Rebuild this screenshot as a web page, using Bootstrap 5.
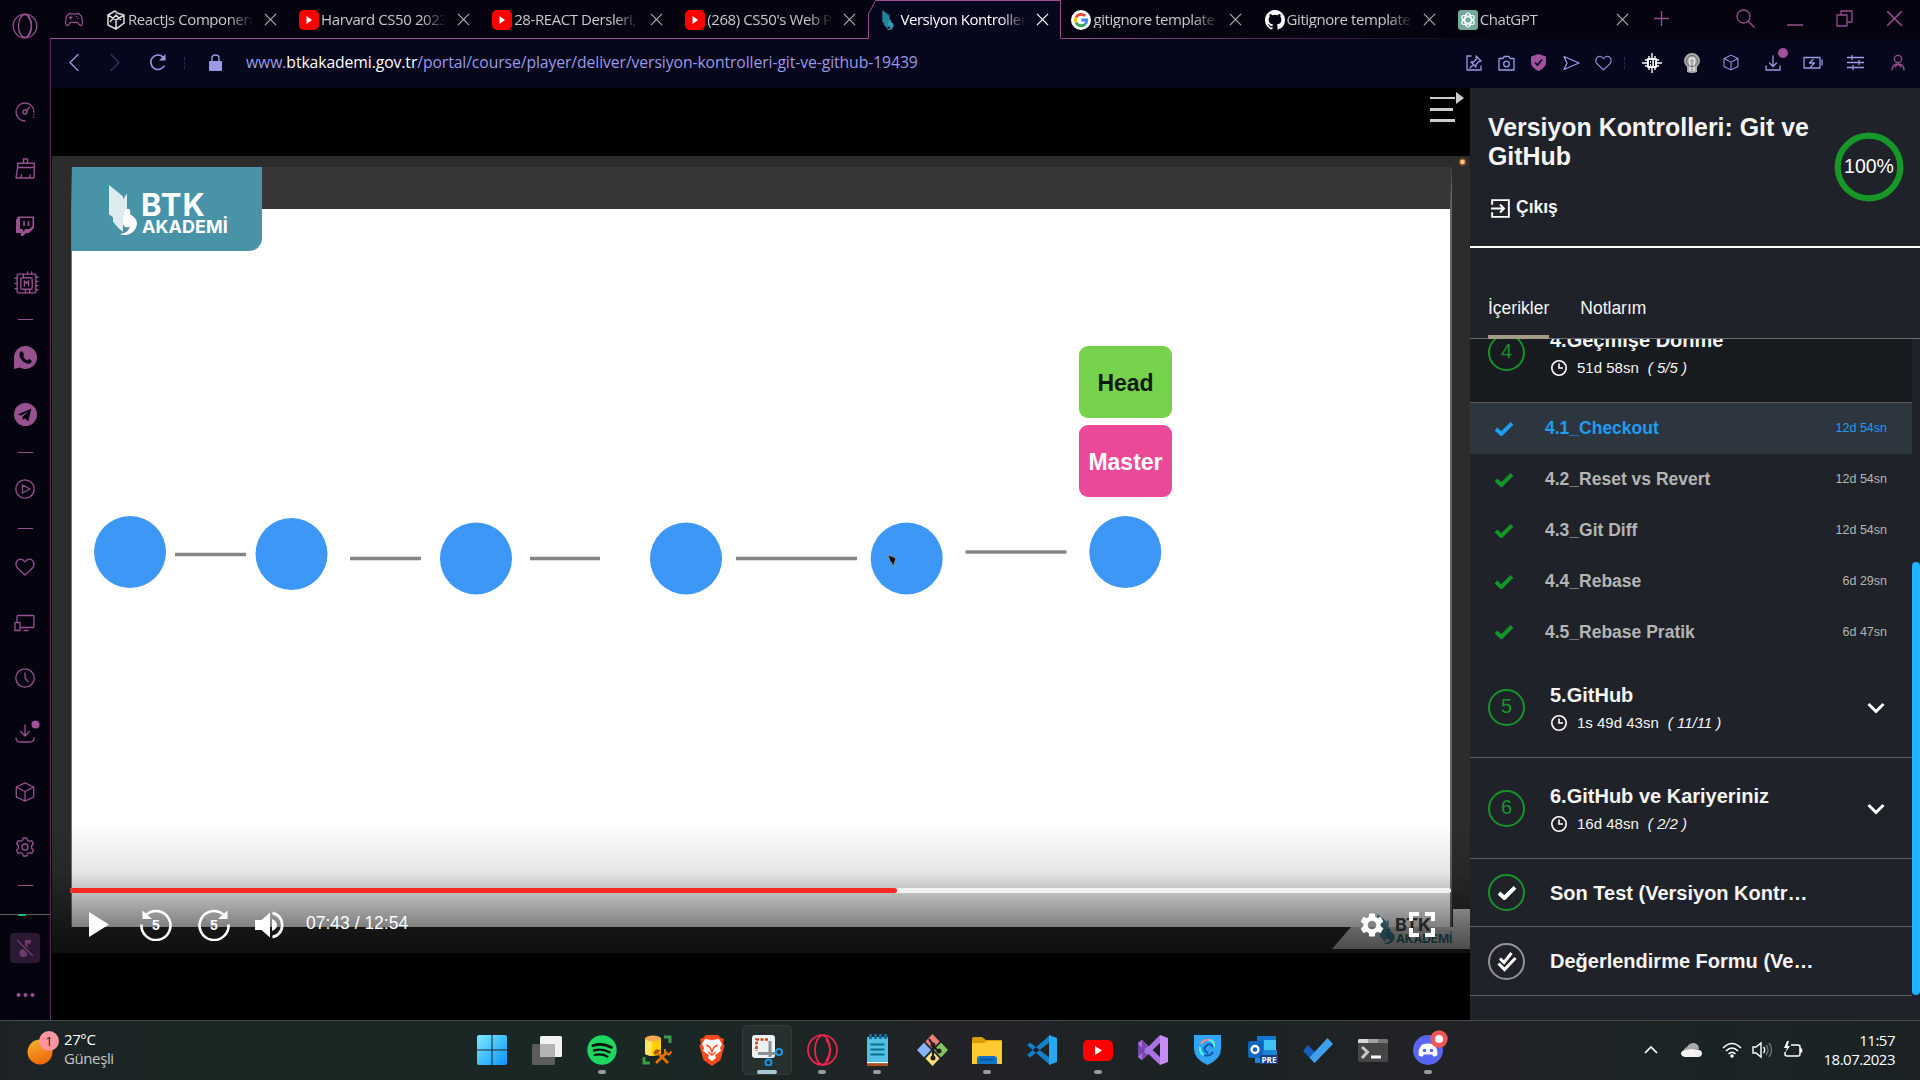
<!DOCTYPE html>
<html lang="tr">
<head>
<meta charset="utf-8">
<title>Versiyon Kontrolleri: Git ve GitHub</title>
<link href="https://cdn.jsdelivr.net/npm/bootstrap@5.3.0/dist/css/bootstrap.min.css" rel="stylesheet">
<style>
:root{--pu:#98508f;--lav:#9a9ae6;--gr:#159527}
body{width:1920px;height:1080px;overflow:hidden;background:#000;font-family:"Liberation Sans",sans-serif;line-height:1.2}
svg{display:block;flex:none}
.ui{font-family:"Open Sans","Noto Sans",sans-serif}
.ln{fill:none;stroke:currentColor;stroke-width:1.3;stroke-linecap:round;stroke-linejoin:round}
/* launcher column */
.dock{width:50px;background:#04030f;color:var(--pu);display:grid;justify-items:center;align-items:center;grid-template-rows:84px 56px 57px 57px 58px 15px 61px 53px 22px 52px 26px 51px 61px 50px 60px 57px 54px 22px 36px 31px 57px}
.dock>svg{margin-left:-1px}
.dash{width:15px;height:1px;background:var(--pu)}
.dock .logo{margin-top:-33px;margin-left:0}
.dock .chip{margin-left:2px}
.meter{width:50px;height:1px;background:#5d5c60;position:relative}
.meter::after{content:"";position:absolute;left:18px;top:0;width:8px;height:2px;border-radius:3px;background:#25b97a}
.mute{width:30px;height:30px;border-radius:4px;background:#2b1833;color:#6d3b6b}
/* tab strip */
.strip{height:39px;background:#04030f;color:var(--pu)}
.strip::after{content:"";position:absolute;left:0;right:0;bottom:0;height:1px;background:linear-gradient(90deg,var(--pu) 1010px,transparent 1440px)}
.tab{width:193.1px;height:31px;padding-left:10px;color:#c8c8cc;font-size:15px;letter-spacing:-.42px}
.tab .cap{width:126px;margin:-2px 0 0 2px;white-space:nowrap;-webkit-mask-image:linear-gradient(90deg,#000 80%,transparent);mask-image:linear-gradient(90deg,#000 80%,transparent)}
.tab .x{margin:-1px 0 0 10px;color:#aaa}
.tab.on{color:#fff;height:39px;z-index:2}
.tab.on .frame{position:absolute;left:0;top:0}
.tab.on .in{height:31px}
.addr{height:49px;padding-bottom:2px;background:#06061c;color:var(--lav)}
.url{font-size:15.75px;letter-spacing:-.1px}
.frame-l{border-left:1px solid #5a2c59}
/* player */
.player{width:1419px;background:#000}
.picture{height:797px;margin-top:68px;margin-left:1px;background:#2c2c2c;overflow:hidden}
.slide{position:absolute;left:19px;top:11px;width:1381px;height:760px;background:#fff;border-top:42px solid #373737;border-right:2px solid #666;border-left:1px solid #777}
.brand{position:absolute;left:20px;top:11px;width:190px;height:84px;background:#4893a8;border-bottom-right-radius:13px;color:#fff}
.btk{position:absolute;font-weight:700;line-height:.8;font-family:Inter,sans-serif}
.node{position:absolute;left:1027px;width:93px;height:72px;border-radius:9px;padding-top:3px;font-weight:700;font-size:23px}
.shade{position:absolute;left:0;right:0;bottom:0;height:130px;background:linear-gradient(rgba(0,0,0,0),rgba(0,0,0,.1) 38%,rgba(0,0,0,.28) 56%,rgba(0,0,0,.5) 80%,rgba(0,0,0,.66))}
.canvas{position:absolute;left:0;top:0}
.controls{position:absolute;left:18px;right:19px;top:732px;color:#fff}
.track{height:5px;background:#f1f1f1;border-radius:3px}
.track>div{height:5px;background:#f42a22;border-radius:3px}
.clock{font-size:17.5px;margin:-2px 0 0 22px}
/* course panel */
.panel{width:450px;background:#1f2329;color:#f5f5f5}
.head{height:160px;border-bottom:2px solid #fff;padding:25px 16px 0 18px}
.head h1{font-size:24.9px;line-height:29px;font-weight:700;width:340px}
.ttabs{height:91px;border-bottom:1px solid #6b6d70;padding-left:18px;font-size:17.5px}
.ttabs>span{padding-top:50px;height:91px;margin-right:31px;line-height:20px}
.ttabs>.on{border-bottom:4px solid #a39b84;z-index:1}
.list{width:442px;height:681px;overflow:hidden}
.sec{height:101px;border-bottom:1px solid #5c6063;padding:26px 27px 0 18px}
.sec.past{background:#181b1f;margin-top:-37px}
.num{width:37px;height:37px;border:2px solid var(--gr);border-radius:50%;color:var(--gr);font-size:20px;margin-top:6px;line-height:30px;text-align:center;flex:none}
.ttl{font-size:20px;font-weight:700;line-height:24px;white-space:nowrap}
.meta{font-size:15px;line-height:20px;margin-top:6px}
.les{height:51px;padding:0 25px 0 25px;color:#b4b4b4;font-size:17.5px;font-weight:700}
.les:nth-child(6){height:50px}
.les svg{color:var(--gr);margin:-1px 1px 0 -1px}
.les small{font-size:12.5px;font-weight:400}
.les.on,.les.on svg{color:#1f9df0}
.les.on{background:#2d363f}
.one{height:68px;border-bottom:1px solid #5c6063;padding-left:18px}
.rail{width:8px;padding-top:223px}
.rail>div{height:433px;border-radius:4px;background:#1eb2ff}
/* taskbar */
.task{height:60px;border-top:1px solid #454a4b;background:linear-gradient(90deg,#1d2226,#1b2725 180px,#1a2725 660px,#222225 1000px,#1f2226 1040px,#1b2323 1220px,#222226 1440px,#1b2424 1700px,#1c2224);color:#fff;font-size:15px}
.app{width:55.1px;height:59px;padding-top:4px;position:relative}
.app .ic{width:50px;height:50px;border-radius:5px;display:flex;align-items:center;justify-content:center}
.app.on .ic{background:#26312f;border:1px solid #323d3b}
.app.run::after,.app.on::after{content:"";position:absolute;left:50%;top:49px;width:8px;height:4px;margin-left:-4px;border-radius:2px;background:#989b9c}
.app.on::after{width:20px;margin-left:-10px;background:#a9c7d0}
.weather{width:464px;padding:0 0 3px 27px}
.date{line-height:19px;letter-spacing:-.5px}
</style>
<script src="https://cdn.jsdelivr.net/npm/bootstrap@5.3.0/dist/js/bootstrap.bundle.min.js"></script>
</head>
<body class="d-flex flex-column">
<svg width="0" height="0" class="position-absolute">
 <symbol id="x" viewBox="0 0 14 14"><path d="M1 1l12 12M13 1L1 13" fill="none" stroke="currentColor" stroke-width="1.3"/></symbol>
 <symbol id="yt" viewBox="0 0 20 20"><rect width="20" height="20" rx="5" fill="#f00"/><path d="M7.500 6v8l5.500-4z" fill="#fff"/></symbol>
 <symbol id="ck" viewBox="0 0 20 15"><path d="M2 8l5.300 5L18 2.300" fill="none" stroke="currentColor" stroke-width="4"/></symbol>
 <symbol id="tm" viewBox="0 0 18 18"><circle cx="9" cy="9" r="7.200" fill="none" stroke="#fff" stroke-width="1.600"/><path d="M9 4.500V9h4" fill="none" stroke="#fff" stroke-width="1.600"/></symbol>
 <symbol id="dn" viewBox="0 0 18 12"><path d="M1.500 2L9 9.500 16.500 2" fill="none" stroke="#fff" stroke-width="3"/></symbol>
 <symbol id="cube" viewBox="0 0 20 20"><path class="ln" d="M10 .8l8.700 4.200v10L10 19.200 1.300 15V5zM1.300 5L10 9.500 18.700 5M10 9.500v9.500"/></symbol>
 <symbol id="bird" viewBox="0 0 28 48"><path d="M0 0l4 3v28l-4-3zM4 3l5 4v34l-5-6zM9 7l5 4v34l-5-4zM14 14l4-6v16l-4 4z" fill="currentColor" opacity=".82"/><path d="M14 29q2-7 6-6 2 1 1 5 6 3 7 8a12 12 0 0 1-17 11q8-1 10-7-5 2-7-2z" fill="currentColor"/></symbol>
 <symbol id="pad" viewBox="0 0 20 16"><path class="ln" d="M5 1.500q5 1.500 10 0l3 3 1 6q0 4-1.500 4-2 0-3.500-3.500H6q-1.500 3.500-3.500 3.500-1.500 0-1.500-4l1-6zM6.500 4.500v3M5 6h3M12.500 5h.3M14 7h.3"/></symbol>
</svg>

<div class="d-flex" style="height:1020px">
 <aside class="dock">
  <svg class="logo" width="26" height="26" viewBox="0 0 26 26"><g class="ln"><circle cx="13" cy="13" r="11.800"/><ellipse cx="13" cy="13" rx="6.500" ry="11.500"/><path d="M16 3.500q7 9 0 19"/></g></svg>
  <svg width="20" height="20" viewBox="0 0 20 20"><g class="ln"><path d="M10 19A9 9 0 1 1 19 10M19 12.500v.2M18.500 15v.2"/><circle cx="10" cy="10" r="2"/><path d="M11.500 8.500l3-3.300"/></g></svg>
  <svg width="21" height="21" viewBox="0 0 20 20" style="margin-left:0"><path class="ln" d="M8 5V1h4v4M2.500 9V5h16v4zM2.500 9L1 19h17l.5-10M5.500 19l.8-3M14 19l.5-3"/></svg>
  <svg width="20" height="20" viewBox="0 0 20 20"><path fill="currentColor" fill-rule="evenodd" d="M3 .5h16v11.500l-5 5h-3l-3 3H6v-3H1V4zM5 2v11h3v2.500L10.500 13h4l3-3V2z"/><path d="M9 5v5M13.500 5v5" stroke="currentColor" stroke-width="1.700"/></svg>
  <svg class="chip" width="25" height="25" viewBox="0 0 24 24"><g class="ln"><rect x="3" y="3" width="18" height="18" rx="1"/><rect x="6.500" y="6.500" width="11" height="11" rx="2"/><path d="M10 14.500v-5l2 2.500 2-2.500v5M9 3v3M13 1v2M17 1v2M1 7h2M1 12h2M1 17h2M21 6h2M21 10h2M21 14h2M21 18h2M11 18v3M15 18v3"/></g></svg>
  <i class="dash"></i>
  <svg width="23" height="23" viewBox="0 0 24 24" style="margin-left:0"><path fill="currentColor" d="M12 0a12 12 0 1 1-6 22.400L0 24V12A12 12 0 0 1 12 0z"/><path fill="#04030f" d="M6 7q1-2 3-1l1.500 3-1 2q1.500 3 4.500 4l1.500-1.500 3 1.500q0 3-3 3.500-4 0-7.500-4Q5 10.500 6 7z"/></svg>
  <svg width="23" height="23" viewBox="0 0 24 24" style="margin-left:0"><circle cx="12" cy="12" r="12" fill="currentColor"/><path fill="#04030f" d="M4 12l14-6-3 13-4-3-2 2v-4l6-5-8 4z"/></svg>
  <i class="dash"></i>
  <svg width="20" height="20" viewBox="0 0 20 20"><g class="ln"><circle cx="10" cy="10" r="9.200"/><path d="M7.500 6v8l7.500-4z"/></g></svg>
  <i class="dash"></i>
  <svg width="20" height="18" viewBox="0 0 20 18"><path class="ln" d="M10 17L2 9.500Q-.5 5 3 2q4-2.500 7 2 3-4.500 7-2 3.500 3 1 7.500z"/></svg>
  <svg width="21" height="18" viewBox="0 0 21 18"><path class="ln" d="M3 7V2.500q0-1 1-1h15q1 0 1 1v10q0 1-1 1H7M1 8.500h5v8H1zM10 16.500h4"/></svg>
  <svg width="20" height="20" viewBox="0 0 20 20"><g class="ln"><circle cx="10" cy="10" r="9.200"/><path d="M10 5v5l3 3.500"/></g></svg>
  <svg width="20" height="24" viewBox="0 0 20 24" overflow="visible"><path class="ln" d="M10 4v11M5.500 10.500L10 15l4.500-4.500M1 17q0 4 4 4h10q4 0 4-4"/><circle cx="20.500" cy="3.500" r="4" fill="#a1509a"/></svg>
  <svg width="20" height="20"><use href="#cube"/></svg>
  <svg width="20" height="20" viewBox="0 0 20 20"><g class="ln"><path d="M8.300 1h3.400l.8 2.500 1.500.8 2.600-.6 1.800 3-1.800 2v2.600l1.800 2-1.800 3-2.600-.6-1.500.8-.8 2.500H8.300l-.8-2.500-1.500-.8-2.600.6-1.800-3 1.800-2V8.700l-1.800-2 1.800-3 2.600.6 1.500-.8z"/><circle cx="10" cy="10" r="3"/></g></svg>
  <i class="dash"></i>
  <div class="meter"></div>
  <div class="mute d-flex align-items-center justify-content-center"><svg width="18" height="18" viewBox="0 0 18 18"><path d="M9 14V1h6v3.500h-3.500V14" fill="currentColor"/><circle cx="7.500" cy="14" r="4" fill="currentColor"/><path d="M1 1l16 16" stroke="#2b1833" stroke-width="4"/><path d="M1 1l16 16" stroke="currentColor" stroke-width="1.600"/></svg></div>
  <svg width="19" height="12" viewBox="0 0 19 12" style="margin-left:0"><g fill="currentColor"><circle cx="2.500" cy="9" r="2"/><circle cx="9.500" cy="9" r="2"/><circle cx="16.500" cy="9" r="2"/></g></svg>
 </aside>

 <main class="flex-grow-1 d-flex flex-column">
  <div class="strip ui d-flex position-relative align-items-start">
   <div class="d-flex align-items-center" style="width:46px;height:39px;padding-left:14px"><svg width="20" height="15"><use href="#pad"/></svg></div>
   <div class="tab d-flex align-items-center mt-1"><svg width="20" height="20" viewBox="0 0 20 20"><path d="M2 5l7-4 2 2 7 2v8l-8 6-8-4zM2 5l8 5 8-5M10 10v8M4 12l6-7 5 5" fill="none" stroke="#ddd" stroke-width="1.500"/></svg><span class="cap">ReactJs Componen</span><svg class="x" width="13" height="13"><use href="#x"/></svg></div>
   <div class="tab d-flex align-items-center mt-1"><svg width="20" height="20"><use href="#yt"/></svg><span class="cap">Harvard CS50 2023</span><svg class="x" width="13" height="13"><use href="#x"/></svg></div>
   <div class="tab d-flex align-items-center mt-1"><svg width="20" height="20"><use href="#yt"/></svg><span class="cap">28-REACT Dersleri,</span><svg class="x" width="13" height="13"><use href="#x"/></svg></div>
   <div class="tab d-flex align-items-center mt-1"><svg width="20" height="20"><use href="#yt"/></svg><span class="cap">(268) CS50's Web P</span><svg class="x" width="13" height="13"><use href="#x"/></svg></div>
   <div class="tab on position-relative">
    <svg class="frame" width="194" height="39" viewBox="0 0 194 39"><path d="M.5 39V14L7.500.5h185V38.500H194V39z" fill="#06061c"/><path d="M.5 38.500V14L7.500.5h185v38" fill="none" stroke="#98508f"/></svg>
    <div class="in d-flex align-items-center position-relative mt-1"><svg width="20" height="20" viewBox="0 0 28 48" color="#2f9db4"><use href="#bird"/></svg><span class="cap">Versiyon Kontroller</span><svg class="x text-white" width="13" height="13"><use href="#x"/></svg></div>
   </div>
   <div class="tab d-flex align-items-center mt-1"><svg width="20" height="20" viewBox="0 0 20 20"><circle cx="10" cy="10" r="10" fill="#fff"/><g fill="none" stroke-width="2.800"><path d="M14.200 6A5.800 5.800 0 0 0 5 7.300" stroke="#ea4335"/><path d="M5 7.300a5.800 5.800 0 0 0 0 5.400" stroke="#fbbc05"/><path d="M5 12.700a5.800 5.800 0 0 0 9 1.500" stroke="#34a853"/><path d="M14 14.200A5.800 5.800 0 0 0 15.800 10H10.300" stroke="#4285f4"/></g></svg><span class="cap">gitignore template</span><svg class="x" width="13" height="13"><use href="#x"/></svg></div>
   <div class="tab d-flex align-items-center mt-1"><svg width="20" height="20" viewBox="0 0 16 16"><path fill="#fff" d="M8 0C3.580 0 0 3.580 0 8c0 3.540 2.290 6.530 5.470 7.590.4.070.55-.17.55-.38 0-.19-.01-.82-.01-1.490-2.010.37-2.530-.49-2.690-.94-.09-.23-.48-.94-.82-1.130-.28-.15-.68-.52-.01-.53.63-.01 1.080.58 1.230.82.720 1.210 1.870.87 2.330.66.070-.52.28-.87.51-1.070-1.780-.2-3.640-.89-3.640-3.950 0-.87.31-1.590.82-2.150-.08-.2-.36-1.020.08-2.120 0 0 .67-.21 2.200.82a7.600 7.600 0 0 1 4 0c1.530-1.040 2.200-.82 2.200-.82.44 1.100.16 1.920.08 2.120.51.56.82 1.270.82 2.150 0 3.070-1.870 3.750-3.650 3.950.29.25.54.73.54 1.480 0 1.070-.01 1.930-.01 2.200 0 .21.15.46.55.38A8 8 0 0 0 16 8c0-4.420-3.580-8-8-8z"/></svg><span class="cap">Gitignore template</span><svg class="x" width="13" height="13"><use href="#x"/></svg></div>
   <div class="tab d-flex align-items-center mt-1"><svg width="20" height="20" viewBox="0 0 20 20"><rect width="20" height="20" rx="3" fill="#74aa9c"/><g fill="none" stroke="#fff" stroke-width="1.200"><ellipse cx="10" cy="10" rx="3.300" ry="7"/><ellipse cx="10" cy="10" rx="3.300" ry="7" transform="rotate(60 10 10)"/><ellipse cx="10" cy="10" rx="3.300" ry="7" transform="rotate(120 10 10)"/></g></svg><span class="cap">ChatGPT</span><svg class="x" width="13" height="13"><use href="#x"/></svg></div>
   <div class="d-flex flex-grow-1 align-items-center" style="height:36px">
    <svg width="15" height="15" viewBox="0 0 15 15" style="margin-left:13px"><path class="ln" d="M7.500 0v15M0 7.500h15"/></svg>
    <svg width="19" height="19" viewBox="0 0 19 19" style="margin-left:67px"><g class="ln"><circle cx="7.500" cy="7.500" r="6.500"/><path d="M12 12l6 6"/></g></svg>
    <svg width="16" height="16" viewBox="0 0 16 16" style="margin-left:32px"><path class="ln" d="M0 15h16"/></svg>
    <svg width="17" height="17" viewBox="0 0 17 17" style="margin-left:33px"><path class="ln" d="M1 5h10v11H1zM5 5V1h11v11h-5"/></svg>
    <svg width="17" height="17" style="margin-left:33px"><use href="#x"/></svg>
   </div>
  </div>

  <div class="addr frame-l ui d-flex align-items-center">
   <svg width="10" height="17" viewBox="0 0 10 17" style="margin-left:18px"><path class="ln" d="M9 .5l-8 8 8 8"/></svg>
   <svg width="10" height="17" viewBox="0 0 10 17" style="margin-left:31px;color:#35345f"><path class="ln" d="M1 .5l8 8-8 8"/></svg>
   <svg width="18" height="17" viewBox="0 0 18 17" style="margin-left:29px"><path d="M15.500 11.500A7.200 7.200 0 1 1 14 3" fill="none" stroke="currentColor" stroke-width="1.600"/><path d="M16.500 0v6.500H10z" fill="currentColor"/></svg>
   <i style="width:1px;height:12px;margin-left:17px;border-left:1px dashed #2b2a55"></i>
   <svg width="13" height="17" viewBox="0 0 13 17" style="margin-left:24px"><rect y="7" width="13" height="10" rx="1" fill="currentColor"/><path d="M3 8V4q0-3 3.500-3T10 4v4" fill="none" stroke="currentColor" stroke-width="1.400"/></svg>
   <span class="url text-nowrap" style="margin-left:24px;width:684px">www.<span class="text-white">btkakademi.gov.tr</span>/portal/course/player/deliver/versiyon-kontrolleri-git-ve-github-19439</span>
   <div class="d-flex align-items-center ms-auto" style="padding-right:15px">
    <svg width="16" height="16" viewBox="0 0 16 16"><path class="ln" d="M5 1H1v14h14v-4M10 1l5 5-2 .5-3 3v2.500L5 7h2.500l3-3zM7.500 9.500L4 13"/></svg>
    <svg width="17" height="16" viewBox="0 0 17 16" style="margin-left:16px"><g class="ln"><path d="M1 3.500h4l1-2h5l1 2h4V15H1z"/><circle cx="8.500" cy="9" r="2.800"/></g></svg>
    <svg width="15" height="17" viewBox="0 0 15 17" style="margin-left:16px"><path d="M7.500 0L15 2.500V9q0 4.500-7.500 8Q0 13.500 0 9V2.500z" fill="#a1509a"/><path d="M4 8.500l2.500 2.500L11 5.500" fill="none" stroke="#06061c" stroke-width="1.600"/></svg>
    <svg width="17" height="16" viewBox="0 0 17 16" style="margin-left:17px"><path class="ln" d="M1 1.500L16 8 1 14.500 4 8z"/></svg>
    <svg width="17" height="16" viewBox="0 0 20 18" style="margin-left:15px"><path class="ln" d="M10 17L2 9.500Q-.5 5 3 2q4-2.500 7 2 3-4.500 7-2 3.500 3 1 7.500z"/></svg>
    <i style="width:1px;height:12px;margin-left:12px;border-left:1px dashed #2b2a55"></i>
    <svg width="20" height="20" viewBox="0 0 20 20" style="margin-left:17px"><path d="M7 3v14M10 0v20M13 3v14M3 7h14M0 10h20M3 13h14" stroke="#fff" stroke-width="1.400"/><rect x="5" y="5" width="10" height="10" rx="1" fill="#fff"/><path d="M7.500 13V7.500h2.200V13M7.500 10.500h2.200M12.500 7v6" fill="none" stroke="#06061c" stroke-width="1.200"/></svg>
    <svg width="18" height="20" viewBox="0 0 18 20" style="margin-left:21px"><path d="M9 0a8 8 0 0 1 8 8q0 3-3 6v5q-5 2-10 0v-5Q1 11 1 8a8 8 0 0 1 8-8z" fill="#aaa"/><path d="M7 18v-7Q5 5 9 5t2 6v7" fill="none" stroke="#eee" stroke-width="1.400"/><circle cx="9" cy="8" r="5.500" fill="none" stroke="#666"/></svg>
    <svg width="16" height="17" style="margin-left:22px" viewBox="0 0 20 20"><use href="#cube"/></svg>
    <svg width="16" height="17" viewBox="0 0 16 17" overflow="visible" style="margin-left:26px"><path class="ln" d="M8 2v10M4.500 9L8 12.500 11.500 9M1 12v4h14v-4"/><circle cx="18" cy="-1" r="5" fill="#a1509a"/></svg>
    <svg width="20" height="13" viewBox="0 0 20 13" style="margin-left:22px"><path class="ln" d="M1 1.500h16v10.500H1zM19 4v5M10 3.500L6.500 7h5L8 10.500"/></svg>
    <svg width="17" height="17" viewBox="0 0 17 17" style="margin-left:24px"><path class="ln" d="M0 3.500h17M0 8.500h17M0 13.500h17M5 1.500v4M12 6.500v4M6 11.500v4"/></svg>
    <svg width="14" height="17" viewBox="0 0 14 17" style="margin-left:27px;color:#98508f"><g class="ln"><circle cx="7" cy="5" r="3.700"/><path d="M1 16q0-6 6-6t6 6M4 13l3-3 3 3"/></g></svg>
   </div>
  </div>

  <div class="d-flex flex-grow-1 frame-l">
   <section class="player position-relative">
    <svg class="position-absolute" style="left:1378px;top:4px" width="36" height="32" viewBox="0 0 36 32"><path d="M1 6h25" stroke="#ccc" stroke-width="2"/><path d="M1 17.500h23M1 28.500h25" stroke="#ccc" stroke-width="3"/><path d="M27 0l8 6-8 6z" fill="#ccc"/></svg>
    <div class="picture position-relative">
     <div class="slide"></div>
     <svg class="canvas" width="1418" height="797" viewBox="52 156 1418 797">
      <g stroke="#858585" stroke-width="3.500"><path d="M175 554.500h71M350 558.500h71M530 558.500h70M736 558.500h121M965.500 552h101"/></g>
      <g fill="#3c97f7"><circle cx="130" cy="552" r="36"/><circle cx="291.500" cy="554" r="36"/><circle cx="476" cy="558.500" r="36"/><circle cx="686" cy="558.500" r="36"/><circle cx="906.700" cy="558.500" r="36"/><circle cx="1125.300" cy="552" r="36"/></g>
      <path d="M888 555l8 3-2 6 2 2-3-1-2-3-1-1z" fill="#111" stroke="#999" stroke-width=".8"/>
      <circle cx="1462.500" cy="162" r="4" fill="#7a4118"/><circle cx="1462.500" cy="162" r="2.400" fill="#ffc98e"/>
      <path d="M1332 949l19-22h102v-18h17v40z" fill="#d2d2d2"/>
      <svg x="1376" y="914" width="20" height="30" color="#2e7f93"><use href="#bird"/></svg>
     </svg>
     <div class="node d-flex align-items-center justify-content-center" style="top:190px;background:#76d14b;color:#0c1a0c">Head</div>
     <div class="node d-flex align-items-center justify-content-center" style="top:269px;background:#eb4998;color:#fff">Master</div>
     <div class="brand"><svg width="28" height="50" viewBox="0 0 28 48" preserveAspectRatio="none" style="margin:18px 0 0 37px"><use href="#bird"/></svg></div>
     <span class="btk text-white" style="left:89px;top:37px;font-size:31px;letter-spacing:1px">BTK</span>
     <span class="btk text-white" style="left:90px;top:64px;font-size:18px;letter-spacing:.05px">AKADEMİ</span>
     <span class="btk" style="left:1343px;top:762px;font-size:18px;color:#444">BTK</span>
     <span class="btk" style="left:1344px;top:778px;font-size:12px;color:#2f6b78;letter-spacing:-.1px">AKADEMİ</span>
     <div class="shade"></div>
     <div class="controls">
      <div class="track"><div style="width:827px"></div></div>
      <div class="d-flex align-items-center" style="padding:9px 16px 0 19px;height:54px">
       <svg width="20" height="25" viewBox="0 0 20 25"><path d="M0 0l20 12.500L0 25z" fill="#fff"/></svg>
       <svg width="32" height="32" viewBox="0 0 32 32" style="margin-left:31px"><path d="M1.500 15.500a14.500 14.500 0 1 0 5-10" fill="none" stroke="#fff" stroke-width="2.600"/><path d="M2.500 1.500v8.500H12z" fill="#fff"/><text x="16" y="21" text-anchor="middle" font-size="14" font-weight="700" fill="#fff">5</text></svg>
       <svg width="32" height="32" viewBox="0 0 32 32" style="margin-left:26px"><path d="M30.500 15.500a14.500 14.500 0 1 1-5-10" fill="none" stroke="#fff" stroke-width="2.600"/><path d="M29.500 1.500v8.500H20z" fill="#fff"/><text x="16" y="21" text-anchor="middle" font-size="14" font-weight="700" fill="#fff">5</text></svg>
       <svg width="29" height="28" viewBox="0 0 29 28" style="margin-left:25px"><path d="M0 9h6.500L15 1.500v25L6.500 19H0zM17 8q5 2 5 6t-5 6z" fill="#fff"/><path d="M17.500 1.800a12.500 12.500 0 0 1 0 24.400" fill="none" stroke="#fff" stroke-width="2.800"/></svg>
       <span class="clock">07:43 / 12:54</span>
       <svg class="ms-auto" width="24" height="24" viewBox="2 2 20 20"><path fill="#fff" d="M19.140 12.940c.04-.3.060-.61.060-.94s-.02-.64-.07-.94l2.030-1.580a.49.49 0 0 0 .12-.61l-1.920-3.320a.49.49 0 0 0-.59-.22l-2.390.96a7 7 0 0 0-1.620-.94l-.36-2.540A.48.480 0 0 0 13.920 2.400h-3.840a.48.480 0 0 0-.47.410l-.36 2.540a7 7 0 0 0-1.620.94l-2.390-.96a.48.480 0 0 0-.59.220L2.740 8.870a.48.480 0 0 0 .12.610l2.030 1.580a7 7 0 0 0 0 1.880l-2.030 1.580a.49.490 0 0 0-.12.610l1.920 3.320c.12.220.37.290.59.220l2.390-.96c.5.380 1.030.7 1.620.94l.36 2.540c.05.240.24.410.48.410h3.840c.24 0 .44-.17.470-.41l.36-2.540a7 7 0 0 0 1.620-.94l2.390.96c.22.080.47 0 .59-.22l1.920-3.320a.48.480 0 0 0-.12-.61zM12 15.600a3.600 3.600 0 1 1 0-7.200 3.600 3.600 0 0 1 0 7.200z"/></svg>
       <svg width="26" height="25" viewBox="0 0 26 25" style="margin-left:25px"><path d="M2 9V2h8M16 2h8v7M24 16v7h-8M10 23H2v-7" fill="none" stroke="#fff" stroke-width="4"/></svg>
      </div>
     </div>
    </div>
   </section>

   <section class="panel">
    <div class="head d-flex justify-content-between">
     <div>
      <h1 class="m-0">Versiyon Kontrolleri: Git ve GitHub</h1>
      <div class="d-flex align-items-center fw-bold" style="margin:25px 0 0 3px;font-size:17.500px"><svg width="19" height="19" viewBox="0 0 20 20" style="margin-top:3px"><path d="M1.200 6V1.200h17.600v17.600H1.200V14M0 10h13M9.500 5.800L13.700 10l-4.200 4.200" fill="none" stroke="#fff" stroke-width="2"/></svg><span style="margin-left:6px">Çıkış</span></div>
     </div>
     <svg width="70" height="70" viewBox="0 0 70 70" style="margin-top:19px"><circle cx="35" cy="35" r="31.300" fill="none" stroke="#159827" stroke-width="6.200"/><text x="35" y="41" text-anchor="middle" font-size="19.500" fill="#fff">100%</text></svg>
    </div>
    <div class="ttabs d-flex"><span class="on position-relative">İçerikler</span><span>Notlarım</span></div>
    <div class="d-flex">
     <div class="list">
      <div class="sec past d-flex"><div class="num">4</div><div style="margin-left:25px"><div class="ttl">4.Geçmişe Dönme</div><div class="meta d-flex align-items-center"><svg width="18" height="18"><use href="#tm"/></svg><span style="margin:0 9px">51d 58sn</span><i>( 5/5 )</i></div></div></div>
      <div class="les on d-flex align-items-center"><svg width="20" height="15"><use href="#ck"/></svg><span style="margin-left:30px">4.1_Checkout</span><small class="ms-auto">12d 54sn</small></div>
      <div class="les d-flex align-items-center"><svg width="20" height="15"><use href="#ck"/></svg><span style="margin-left:30px">4.2_Reset vs Revert</span><small class="ms-auto">12d 54sn</small></div>
      <div class="les d-flex align-items-center"><svg width="20" height="15"><use href="#ck"/></svg><span style="margin-left:30px">4.3_Git Diff</span><small class="ms-auto">12d 54sn</small></div>
      <div class="les d-flex align-items-center"><svg width="20" height="15"><use href="#ck"/></svg><span style="margin-left:30px">4.4_Rebase</span><small class="ms-auto">6d 29sn</small></div>
      <div class="les d-flex align-items-center"><svg width="20" height="15"><use href="#ck"/></svg><span style="margin-left:30px">4.5_Rebase Pratik</span><small class="ms-auto">6d 47sn</small></div>
      <div class="sec d-flex"><div class="num">5</div><div style="margin-left:25px"><div class="ttl">5.GitHub</div><div class="meta d-flex align-items-center"><svg width="18" height="18"><use href="#tm"/></svg><span style="margin:0 9px">1s 49d 43sn</span><i>( 11/11 )</i></div></div><svg class="ms-auto" width="18" height="12" style="margin-top:19px"><use href="#dn"/></svg></div>
      <div class="sec d-flex"><div class="num">6</div><div style="margin-left:25px"><div class="ttl">6.GitHub ve Kariyeriniz</div><div class="meta d-flex align-items-center"><svg width="18" height="18"><use href="#tm"/></svg><span style="margin:0 9px">16d 48sn</span><i>( 2/2 )</i></div></div><svg class="ms-auto" width="18" height="12" style="margin-top:19px"><use href="#dn"/></svg></div>
      <div class="one d-flex align-items-center"><div class="num m-0 d-flex align-items-center justify-content-center text-white"><svg width="20" height="15"><use href="#ck"/></svg></div><div class="ttl" style="margin-left:25px">Son Test (Versiyon Kontr…</div></div>
      <div class="one d-flex align-items-center" style="height:69px"><div class="num m-0 d-flex align-items-center justify-content-center text-white" style="border-color:#919395"><svg width="20" height="21" viewBox="0 0 20 21"><path d="M3 7.500l4 4L14.500 2M1.500 12.500l6 6L18.500 7" fill="none" stroke="#fff" stroke-width="3"/></svg></div><div class="ttl" style="margin-left:25px">Değerlendirme Formu (Ve…</div></div>
     </div>
     <div class="rail"><div></div></div>
    </div>
   </section>
  </div>
 </main>
</div>

<footer class="task ui d-flex">
 <div class="weather d-flex align-items-center">
  <svg width="37" height="40" viewBox="0 0 37 40"><defs><linearGradient id="sun" x2=".4" y2="1"><stop stop-color="#f5b52e"/><stop offset="1" stop-color="#f06a0c"/></linearGradient></defs><circle cx="13" cy="23" r="12.500" fill="url(#sun)"/><circle cx="22" cy="12" r="10" fill="#ff959c"/><text x="22" y="16.500" font-size="13" text-anchor="middle" fill="#222">1</text></svg>
  <div class="date" style="letter-spacing:-.4px"><div>27°C</div><div style="color:#c3c6c6">Güneşli</div></div>
 </div>
 <div class="app"><div class="ic mx-auto"><svg width="30" height="30" viewBox="0 0 30 30"><defs><linearGradient id="win" x2="1" y2="1"><stop stop-color="#7ceaff"/><stop offset="1" stop-color="#0a94ff"/></linearGradient></defs><path fill="url(#win)" d="M2 0h12.500v14.500H0V2q0-2 2-2zM15.500 0H28q2 0 2 2v12.500H15.500zM0 15.500h14.500V30H2q-2 0-2-2zM15.500 15.500H30V28q0 2-2 2H15.500z"/></svg></div></div>
 <div class="app"><div class="ic mx-auto"><svg width="30" height="29" viewBox="0 0 30 29"><rect y="8" width="23" height="21" rx="1.500" fill="#5c5c5f"/><rect x="8" width="22" height="21" rx="1.500" fill="#f2f2f2"/><path d="M8 8h15v13H8z" fill="#b4b4b4"/></svg></div></div>
 <div class="app run"><div class="ic mx-auto"><svg width="30" height="30" viewBox="0 0 30 30"><circle cx="15" cy="15" r="14.700" fill="#1ed760"/><g fill="none" stroke="#06120a" stroke-linecap="round"><path d="M6 10.500q10-3 18.500 2" stroke-width="2.800"/><path d="M7 15.500q8-2.300 15.500 1.700" stroke-width="2.400"/><path d="M7.500 20q7-1.800 13 1.600" stroke-width="2"/></g></svg></div></div>
 <div class="app"><div class="ic mx-auto"><svg width="30" height="30" viewBox="0 0 30 30"><path d="M3 3v16q7 4 16 0V3z" fill="#ffd000"/><path d="M3 3v16q4 2 7 2V3z" fill="#ffe268"/><ellipse cx="11" cy="3.500" rx="8" ry="3" fill="#f5a855"/><path d="M22 2h6v6M2 22v6h6" fill="none" stroke="#3d9a47" stroke-width="3"/><path d="M14 28l11-11M16 18l10 10" stroke="#e57200" stroke-width="2.800"/><path d="M11 18l3-3.500 5 .5-5 5z" fill="#a85208"/><path d="M23 14v4l4 1.500 2.500-3" fill="none" stroke="#e57200" stroke-width="2"/></svg></div></div>
 <div class="app"><div class="ic mx-auto"><svg width="26" height="31" viewBox="0 0 26 31"><path d="M7 0h12l3 3 3 1-1 4 1.500 3-4 14L13 31 4.500 25 .5 11 2 8 1 4l3-1z" fill="#fb4a1d"/><path d="M13 5l7-1 3 5-2 4 1 3-6 4 1 3-4 3-4-3 1-3-6-4 1-3-2-4 3-5z" fill="#fff"/><path d="M7 10l4 2 2 5 2-5 4-2M9 17l4 3 4-3" fill="none" stroke="#fb4a1d" stroke-width="1.500"/></svg></div></div>
 <div class="app on"><div class="ic mx-auto"><svg width="32" height="32" viewBox="0 0 32 32"><rect x="1" y="1" width="23" height="23" rx="3" fill="#eef1f4"/><path d="M17 5.500H5.500V17" fill="none" stroke="#d0450f" stroke-width="2.600" stroke-dasharray="3 1.500"/><path d="M19 7v16M7 19.500h18" stroke="#8b8f96" stroke-width="3"/><circle cx="28" cy="18" r="3" fill="none" stroke="#1f93e0" stroke-width="2"/><circle cx="17.500" cy="28.500" r="3" fill="none" stroke="#1f93e0" stroke-width="2"/></svg></div></div>
 <div class="app run"><div class="ic mx-auto"><svg width="31" height="32" viewBox="0 0 31 32" fill="none" stroke="#f0244f" stroke-width="1.700"><ellipse cx="15.500" cy="16" rx="14.500" ry="15"/><ellipse cx="15.500" cy="16" rx="7.500" ry="14.500"/><path d="M19 5q8 11 0 22"/></svg></div></div>
 <div class="app run"><div class="ic mx-auto"><svg width="23" height="32" viewBox="0 0 23 32"><path d="M1 3h21v25H1z" fill="#51c0e2"/><path d="M1 28h21v1.500H1z" fill="#fff"/><path d="M1 29.500h21V32H1z" fill="#a9501c"/><path d="M4.500 10.500h14M4.500 15.500h14M4.500 20.500h14" stroke="#106e96" stroke-width="2"/><path d="M3 2.500h18" stroke="#0f6b94" stroke-width="5" stroke-dasharray="3 2"/></svg></div></div>
 <div class="app"><div class="ic mx-auto"><svg width="31" height="32" viewBox="0 0 31 32"><path d="M15.500 0l7 7.500-7 7.500-7-7.500z" fill="#f27e7e"/><path d="M24 8.500l7 7.500-7 7.500-7-7.500z" fill="#80c760"/><path d="M7 8.500l7 7.500-7 7.500L0 16z" fill="#86b3fa"/><path d="M15.500 17l7 7.500-7 7.500-7-7.500z" fill="#fbe07c"/><path d="M12 5l4 6v14M16 12l6 6" stroke="#222" stroke-width="2.200" fill="none"/><g fill="#222"><circle cx="16" cy="11" r="2.500"/><circle cx="16" cy="24" r="2.500"/><circle cx="22" cy="17" r="2.500"/></g></svg></div></div>
 <div class="app run"><div class="ic mx-auto"><svg width="30" height="27" viewBox="0 0 30 27"><path d="M0 2q0-2 2-2h8l4 3h16v6H0z" fill="#dc9c08"/><path d="M0 6h12l3-2h14q1 0 1 1v22H0z" fill="#ffc934"/><path d="M5 27v-5q0-3 3-3h14q3 0 3 3v5z" fill="#0d75c9"/><path d="M8 22.500h14" stroke="#084f93" stroke-width="1.500"/></svg></div></div>
 <div class="app"><div class="ic mx-auto"><svg width="30" height="30" viewBox="0 0 30 30"><path d="M0 10l3-2.500L23 23v7zM0 20l3 2.500L23 7V0z" fill="#1380c8"/><path d="M22 0l8 3v24l-8 3z" fill="#28a8ee"/></svg></div></div>
 <div class="app run"><div class="ic mx-auto"><svg width="30" height="21" viewBox="0 0 30 21"><rect width="30" height="21" rx="5" fill="#f00"/><path d="M12 6v9l7-4.500z" fill="#fff"/></svg></div></div>
 <div class="app"><div class="ic mx-auto"><svg width="30" height="30" viewBox="0 0 30 30"><path d="M0 7l4-2v20l-4-3z" fill="#7544a5"/><path d="M4 5l18 17v8L0 9zM0 22L22 0v8L4 25z" fill="#a874e4"/><path d="M4 5l6 6-5 5 5 4-6 5z" fill="#7849ac"/><path d="M22 0l8 3v24l-8 3z" fill="#c78cf5"/></svg></div></div>
 <div class="app"><div class="ic mx-auto"><svg width="27" height="30" viewBox="0 0 27 30"><path d="M0 0h27v14q0 10-13.500 16Q0 24 0 14z" fill="#31a4f5"/><path d="M20 8a7.500 7.500 0 0 0-13 1" fill="none" stroke="#ff878c" stroke-width="2"/><path d="M15 5q6 1 5 7M6 12a7.500 7.500 0 0 0 4 8" fill="none" stroke="#4fffe0" stroke-width="2"/><path d="M10 20q6 2 9-3M19 12q-3-5-7-1t2 7" fill="none" stroke="#1556b3" stroke-width="2"/></svg></div></div>
 <div class="app"><div class="ic mx-auto"><svg width="30" height="28" viewBox="0 0 30 28"><path d="M9 0h19v14H9z" fill="#1477cf"/><path d="M16 4h12v10H16z" fill="#41c2f5"/><path d="M7 14h22v13H7z" fill="#1d84d8"/><rect y="5" width="15" height="17" rx="2" fill="#0f64bd"/><circle cx="7" cy="13.500" r="3.500" fill="none" stroke="#fff" stroke-width="2.300"/><path d="M12 19h18v9H12z" fill="#16418a"/><text x="21" y="26.500" font-size="8" font-weight="700" text-anchor="middle" fill="#fff">PRE</text></svg></div></div>
 <div class="app"><div class="ic mx-auto"><svg width="30" height="25" viewBox="0 0 30 25"><path d="M0 13l5-6 12 12-5.500 6z" fill="#185abd"/><path d="M6.500 19.500L24.500 0 30 6 11.500 25z" fill="#40a0ec"/></svg></div></div>
 <div class="app"><div class="ic mx-auto"><svg width="30" height="23" viewBox="0 0 30 23"><rect width="30" height="23" rx="1.500" fill="#464646"/><path d="M0 4V1.500Q0 0 1.500 0H10v4z" fill="#d8d8d8"/><path d="M10 0h10v4H10z" fill="#a2a2a2"/><path d="M20 0h8.500Q30 0 30 1.500V4H20z" fill="#777"/><path d="M4 8l5.500 5L4 19" fill="none" stroke="#c9c9c9" stroke-width="3"/><path d="M13 18h10" stroke="#fff" stroke-width="3"/></svg></div></div>
 <div class="app run"><div class="ic mx-auto"><svg width="30" height="30" viewBox="0 0 30 30" overflow="visible"><circle cx="15" cy="15" r="15" fill="#5865f2"/><path d="M9 9.500q6-2 12 0 4 5 3.500 10.500-2.500 2-4 1.500l-1.500-2h-8l-1.500 2q-2 .5-4-1.500Q5 14.500 9 9.500z" fill="#fff"/><circle cx="11.500" cy="15.500" r="1.800" fill="#5865f2"/><circle cx="18.500" cy="15.500" r="1.800" fill="#5865f2"/><circle cx="26" cy="4" r="8.700" fill="#f05656"/><circle cx="26" cy="4" r="4" fill="#fff"/></svg></div></div>
 <div class="d-flex align-items-center ms-auto" style="padding:0 25px 2px 0">
  <svg width="14" height="9" viewBox="0 0 14 9"><path d="M1 8l6-6 6 6" fill="none" stroke="#fff" stroke-width="1.700"/></svg>
  <svg width="21" height="14" viewBox="0 0 21 14" style="margin-left:23px"><path d="M4 12Q1 5 6 4q2-4 7-4 5 1 5 6z" fill="#aaa"/><path d="M4 14q-4-.5-4-4 1-3 5-3l5-1q3 0 5 1 5-1 6 3 0 4-4 4z" fill="#f2f2f2"/></svg>
  <svg width="20" height="16" viewBox="0 0 20 16" style="margin-left:20px" fill="none" stroke="#fff" stroke-width="1.500"><path d="M1 6Q10-3 19 6M4 9q6-6 12 0M6.500 12q3.500-3.500 7 0"/><circle cx="10" cy="14" r="1" fill="#fff"/></svg>
  <svg width="21" height="18" viewBox="0 0 21 18" style="margin-left:10px" fill="none" stroke="#fff" stroke-width="1.400"><path d="M1 6h3l5-4v14l-5-4H1zM11.500 6q2.500 3 0 6"/><path d="M14 4q4 5 0 10M17 2q5 7 0 14" stroke="#6d7272"/></svg>
  <svg width="20" height="17" viewBox="0 0 20 17" style="margin-left:10px" fill="none" stroke="#fff" stroke-width="1.500"><path d="M8 4h7q2 0 2 2v7q0 2-2 2H4q-2 0-2-2v-2M18.500 7.500v4"/><path d="M4 0L1 7h3L2 12l5-7H4.500L6 0z" fill="#fff" stroke="none"/></svg>
  <div class="date text-end" style="width:92px"><div>11:57</div><div>18.07.2023</div></div>
 </div>
</footer>
</body>
</html>
